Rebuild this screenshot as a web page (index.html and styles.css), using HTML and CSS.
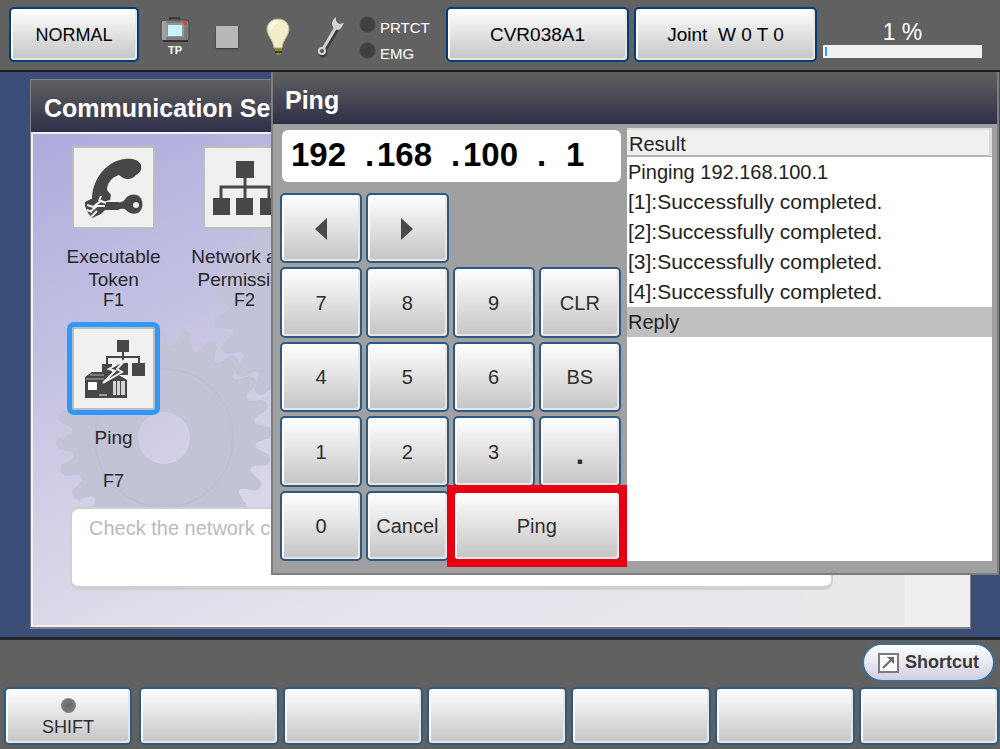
FILE: index.html
```html
<!DOCTYPE html>
<html lang="en">
<head>
<meta charset="utf-8">
<meta name="viewport" content="width=device-width, initial-scale=1">
<title>Ping</title>
<link rel="stylesheet" href="styles.css">
</head>
<body>
<header class="topbar">
  <button class="btn mode" type="button">NORMAL</button>
  <div class="status">
    <div class="tp">
      <svg width="30" height="26" viewBox="0 0 30 26" aria-hidden="true">
        <path d="M10 3V1h9v2" fill="none" stroke="#3c3c3c" stroke-width="2"/>
        <rect x="1" y="3" width="28" height="21" rx="3" fill="#7b7d7e" stroke="#4a4a4a"/>
        <rect x="2" y="4" width="4" height="19" fill="#a0a0a0"/>
        <rect x="6" y="6" width="18" height="14" fill="#969696"/>
        <rect x="8" y="8" width="14" height="11" fill="#c8f4fc"/>
        <circle cx="25" cy="6" r="2" fill="#e84040"/>
        <path d="M3 24h25" stroke="#333" stroke-width="2"/>
      </svg>
      <span>TP</span>
    </div>
    <span class="stop"></span>
    <svg width="26" height="40" viewBox="0 0 26 40" aria-label="Lamp">
      <path d="M13 2C6 2 2 7 2 12c0 7 6 10 7 19h8c1-9 7-12 7-19C24 7 20 2 13 2z" fill="#f3edc8" stroke="#b9b397"/>
      <path d="M6 12c0-4 3-7 7-7" fill="none" stroke="#fffdf0" stroke-width="3"/>
      <path d="M10 31h7v4l-2 3h-3l-2-3z" fill="#8c8a35"/>
      <path d="M10 35h7" stroke="#454420" stroke-width="2"/>
    </svg>
    <svg width="28" height="42" viewBox="0 0 28 42" aria-label="Maintenance">
      <g fill="none" stroke="#3c3c3c" transform="translate(1 2)">
        <path d="M6 33 19 12" stroke-width="4"/>
        <circle cx="5" cy="35" r="3" stroke-width="3"/>
      </g>
      <path d="M6 33 19 11" stroke="#d4d4d4" stroke-width="3"/>
      <circle cx="5" cy="35" r="3" fill="#555" stroke="#d4d4d4" stroke-width="2"/>
      <path d="M19 1c-4 3-5 7-3 10 2 3 6 4 8 1l3-5-5 1-3-3z" fill="#d4d4d4"/>
    </svg>
  </div>
  <ul class="leds">
    <li>PRTCT</li>
    <li>EMG</li>
  </ul>
  <button class="btn wide" type="button">CVR038A1</button>
  <button class="btn wide" type="button">Joint&nbsp; W 0 T 0</button>
  <div class="override">
    <label for="speed">1 %</label>
    <progress id="speed" max="100" value="1"></progress>
  </div>
</header>

<main class="stage">
  <section class="window">
    <h1>Communication Setup</h1>
    <div class="panel">
      <svg class="gears" width="460" height="480" viewBox="0 0 460 480" aria-hidden="true">
        <defs>
          <path id="tooth" d="M-13-86C-8-94-7-99-6-105Q0-112 6-105C7-99 8-94 13-86z"/>
          <g id="quarter">
            <use href="#tooth"/>
            <use href="#tooth" transform="rotate(15)"/>
            <use href="#tooth" transform="rotate(30)"/>
            <use href="#tooth" transform="rotate(45)"/>
            <use href="#tooth" transform="rotate(60)"/>
            <use href="#tooth" transform="rotate(75)"/>
          </g>
          <g id="gear">
            <use href="#quarter"/>
            <use href="#quarter" transform="rotate(90)"/>
            <use href="#quarter" transform="rotate(180)"/>
            <use href="#quarter" transform="rotate(270)"/>
            <path fill-rule="evenodd" d="M-92 0a92 92 0 1 0 184 0a92 92 0 1 0-184 0zM-26 0a26 26 0 1 0 52 0a26 26 0 1 0-52 0z"/>
          </g>
        </defs>
        <use href="#gear" transform="translate(131 304) rotate(-3)" fill="#c2c3d5"/>
        <circle cx="131" cy="304" r="69" fill="none" stroke="#bcbed1" stroke-width="2"/>
        <use href="#gear" transform="translate(288 172) rotate(6)" fill="#c2c3d8"/>
      </svg>
      <div class="menu">
        <a class="item" href="#token">
          <span class="tile">
            <svg width="64" height="64" viewBox="0 0 64 64" aria-hidden="true">
              <g fill="#464846">
                <path d="M10 46C9 24 24 5 43 3c8-1 14 1 16 6 1 5-1 8-5 10-3 4-8 5-13 3l-4-3c-7 2-12 8-12 15l4 5-1 5-7 2z"/>
                <path d="M22 46h14c4 1 6-1 8-4 3-4 10-5 14-1 4 5 3 13-2 16-5 2-9 0-12-3-3-2-5-1-8 0H22z"/>
                <path d="M3 46l6-3 12 2 3 8-5 5-9 4-4-5-3-7z"/>
              </g>
              <circle cx="54" cy="49" r="3" fill="#f0f0f0"/>
              <path d="M5 49l6 2 8-6 5 2M8 56l7-6h8M9 61l6-6M19 40l-2 5M5 54l5 2" fill="none" stroke="#f0f0f0" stroke-width="2"/>
            </svg>
          </span>
          <span class="name">Executable<br>Token</span>
          <span class="key">F1</span>
        </a>
        <a class="item" href="#network">
          <span class="tile">
            <svg width="64" height="64" viewBox="0 0 64 64" aria-hidden="true">
              <path d="M23 5h18v17H23zM0 42h17v17H0zM23 42h17v17H23zM47 42h17v17H47z" fill="#464846"/>
              <path d="M32 20v24M8 44V31h48v13" fill="none" stroke="#464846" stroke-width="3"/>
            </svg>
          </span>
          <span class="name">Network and<br>Permission</span>
          <span class="key">F2</span>
        </a>
        <a class="item selected" href="#ping">
          <span class="tile">
            <svg width="64" height="64" viewBox="0 0 64 64" aria-hidden="true">
              <path d="M35 3h12v12H35zM20 27h10v10H20zM35 26h11v12H35zM50 26h13v13H50z" fill="#464846"/>
              <path d="M41 14v14M25 28v-8h32v7" fill="none" stroke="#464846" stroke-width="2"/>
              <path d="M3 43v-3l7-5h22l13 8v18H3z" fill="#464846"/>
              <path d="M6 45h9v8H6z" fill="#fafafa"/>
              <path d="M31 44h3v14h-3zM35 44h3v14h-3zM39 44h4v14h-4z" fill="#d4d4d4"/>
              <path d="M17 58h8" stroke="#999" stroke-width="2"/>
              <path d="M4 42h18M8 38h14" stroke="#b0b0b0"/>
              <path d="M43 23 27 32l6 2-12 12 19-11-5-3z" fill="#464846" stroke="#f0f0f0" stroke-width="2"/>
            </svg>
          </span>
          <span class="name">Ping</span>
          <span class="key">F7</span>
        </a>
      </div>
      <p class="hint">Check the network connection.</p>
    </div>
  </section>

  <section class="dialog" role="dialog" aria-labelledby="dialog-title">
    <h2 id="dialog-title">Ping</h2>
    <div class="dialog-body">
      <form class="entry">
        <div class="address" role="group" aria-label="IP address">
          <input aria-label="Octet 1" value="192"><span>.</span>
          <input aria-label="Octet 2" value="168"><span>.</span>
          <input aria-label="Octet 3" value="100"><span>.</span>
          <input class="last" aria-label="Octet 4" value="1">
        </div>
        <div class="keypad">
          <button class="btn" type="button" aria-label="Left"><svg width="12" height="22" viewBox="0 0 12 22"><path d="M12 0v22L0 11z" fill="#484a48"/></svg></button>
          <button class="btn" type="button" aria-label="Right"><svg width="12" height="22" viewBox="0 0 12 22"><path d="M0 0v22l12-11z" fill="#484a48"/></svg></button>
          <button class="btn row-start" type="button">7</button>
          <button class="btn" type="button">8</button>
          <button class="btn" type="button">9</button>
          <button class="btn" type="button">CLR</button>
          <button class="btn" type="button">4</button>
          <button class="btn" type="button">5</button>
          <button class="btn" type="button">6</button>
          <button class="btn" type="button">BS</button>
          <button class="btn" type="button">1</button>
          <button class="btn" type="button">2</button>
          <button class="btn" type="button">3</button>
          <button class="btn point" type="button">.</button>
          <button class="btn" type="button">0</button>
          <button class="btn" type="button">Cancel</button>
          <button class="btn send" type="button">Ping</button>
        </div>
      </form>
      <div class="results">
        <h3>Result</h3>
        <ul>
          <li>Pinging 192.168.100.1</li>
          <li class="reply">[1]:Successfully completed.</li>
          <li class="reply">[2]:Successfully completed.</li>
          <li class="reply">[3]:Successfully completed.</li>
          <li class="reply">[4]:Successfully completed.</li>
          <li class="current">Reply</li>
        </ul>
      </div>
    </div>
  </section>
</main>

<footer class="bottombar">
  <button class="shortcut" type="button">
    <svg width="21" height="20" viewBox="0 0 21 20" aria-hidden="true">
      <rect x="1" y="1" width="19" height="18" fill="#fafafa" stroke="#7c7c7c" stroke-width="2"/>
      <path d="M5 15 14 6" stroke="#6a6a6a" stroke-width="2"/>
      <path d="M9 4h7v7z" fill="#6a6a6a"/>
    </svg>
    Shortcut
  </button>
  <div class="softkeys">
    <button class="btn shift" type="button"><i></i>SHIFT</button>
    <button class="btn" type="button" aria-label="Soft key 1"></button>
    <button class="btn" type="button" aria-label="Soft key 2"></button>
    <button class="btn" type="button" aria-label="Soft key 3"></button>
    <button class="btn" type="button" aria-label="Soft key 4"></button>
    <button class="btn" type="button" aria-label="Soft key 5"></button>
    <button class="btn" type="button" aria-label="Soft key 6"></button>
  </div>
</footer>
</body>
</html>
```
FILE: styles.css
```css
* {
  box-sizing: border-box;
}

body {
  margin: 0;
  min-height: 100vh;
  display: flex;
  flex-direction: column;
  background: #616161;
  color: #222;
  font-family: "Liberation Sans", Arial, sans-serif;
  font-size: 20px;
}

h1, h2, h3, p, ul {
  margin: 0;
  padding: 0;
}

ul {
  list-style: none;
}

.btn {
  display: flex;
  align-items: center;
  justify-content: center;
  margin: 0;
  padding: 0;
  border: 2px solid #2c5a86;
  border-radius: 5px;
  background: linear-gradient(#ffffff, #c4c4c4);
  box-shadow: inset 2px 2px 0 #ffffff, inset -2px -2px 0 #e6e6e6;
  color: #2e2e2e;
  font: inherit;
}

/* Status bar */
.topbar {
  display: flex;
  align-items: center;
  height: 72px;
  padding: 0 18px 2px 9px;
  border-bottom: 2px solid #1c1c1c;
  background: #616161;
}

.topbar .btn {
  height: 55px;
  padding-top: 2px;
  border-color: #003c78;
  color: #000;
  font-size: 19px;
}

.topbar .mode {
  width: 130px;
  font-size: 18px;
}

.topbar .wide {
  flex: 1;
  margin-right: 5px;
}

.status {
  display: flex;
  align-items: center;
  justify-content: space-between;
  width: 185px;
  margin: 6px 14px 0 21px;
}

.tp {
  display: flex;
  flex-direction: column;
  align-items: center;
  color: #fff;
  font-size: 11px;
  font-weight: bold;
  line-height: 14px;
}

.stop {
  width: 22px;
  height: 22px;
  background: #b8b8b8;
  box-shadow: 0 1px 2px #333;
}

.leds {
  width: 87px;
  margin-top: 14px;
  color: #fff;
  font-size: 15px;
  line-height: 26px;
}

.leds li {
  display: flex;
  align-items: center;
  gap: 4px;
}

.leds li::before {
  content: "";
  width: 15px;
  height: 15px;
  margin-bottom: 7px;
  border: 1px solid #555;
  border-radius: 50%;
  background: #404040;
}

.override {
  display: flex;
  flex-direction: column;
  width: 159px;
  margin: 9px 0 0 1px;
  color: #fff;
  font-size: 23px;
  line-height: 26px;
  text-align: center;
}

progress {
  appearance: none;
  display: block;
  width: 100%;
  height: 13px;
  padding: 2px;
  border: 0;
  background: #f0f0f0;
}

progress::-webkit-progress-bar {
  background: #f0f0f0;
}

progress::-webkit-progress-value {
  background: #3399ff;
}

/* Work area */
.stage {
  position: relative;
  flex: 1;
  display: flex;
  padding: 7px 29px 8px 30px;
  background: #3a4e78;
  border-bottom: 3px solid #282828;
}

.window {
  flex: 1;
  display: flex;
  flex-direction: column;
  border: 1px solid #808080;
  border-bottom-width: 2px;
}

.window h1,
.dialog h2 {
  height: 52px;
  background: linear-gradient(#606060, #2f2f48);
  color: #fff;
  font-size: 25px;
  line-height: 56px;
}

.window h1 {
  padding-left: 13px;
}

.panel {
  position: relative;
  flex: 1;
  display: flex;
  flex-direction: column;
  justify-content: space-between;
  padding: 12px 135px 35px 15px;
  overflow: hidden;
  border: 2px solid #f0f0f4;
  background:
    linear-gradient(#efefef, #efefef) right / 63px 100% no-repeat,
    linear-gradient(#e8e8e8, #e8e8e8) right / 163px 100% no-repeat,
    linear-gradient(155deg, #acabdd, #cfcde5 38%, #e4e3ec 65%, #e8e8ec);
}

.gears {
  position: absolute;
  left: 0;
  top: 0;
}

.menu {
  position: relative;
  display: grid;
  grid-template-columns: 131px 131px;
  row-gap: 17px;
}

.item {
  display: flex;
  flex-direction: column;
  align-items: center;
  color: #26262c;
  font-size: 19px;
  text-align: center;
  text-decoration: none;
}

.tile {
  display: flex;
  align-items: center;
  justify-content: center;
  width: 83px;
  height: 83px;
  border: 2px solid #bdbdbd;
  background: #f0f0f0;
}

.selected .tile {
  outline: 5px solid #2f98f8;
  border-radius: 2px;
}

.name {
  min-height: 46px;
  margin-top: 16px;
  line-height: 23px;
}

.key {
  font-size: 18px;
  line-height: 19px;
}

.hint {
  position: relative;
  height: 83px;
  margin-left: 22px;
  padding: 7px 17px;
  border: 2px solid #d0d0d0;
  border-bottom-width: 4px;
  border-radius: 9px;
  background: #fff;
  color: #bababa;
  line-height: 24px;
}

/* Ping dialog */
.dialog {
  position: absolute;
  top: 0;
  right: 1px;
  bottom: 62px;
  left: 271px;
  display: flex;
  flex-direction: column;
  border: 2px solid #7e7e7e;
  border-top: 0;
  background: #a0a0a0;
}

.dialog h2 {
  padding-left: 12px;
}

.dialog-body {
  flex: 1;
  display: flex;
  gap: 6px;
  padding: 4px 5px 12px 7px;
}

.entry {
  flex: none;
  display: flex;
  flex-direction: column;
  gap: 11px;
  width: 341px;
}

.address {
  display: flex;
  align-items: center;
  height: 52px;
  margin: 2px 0 0 2px;
  padding: 0 7px 3px 9px;
  border-radius: 6px;
  background: #fff;
  color: #000;
  font-size: 33px;
  font-weight: bold;
}

.address input {
  width: 74px;
  padding: 0;
  border: 0;
  background: none;
  color: inherit;
  font: inherit;
}

.address span {
  width: 12px;
}

.address .last {
  width: 56px;
  padding-left: 17px;
}

.keypad {
  flex: 1;
  display: grid;
  grid-template-columns: repeat(4, 1fr);
  grid-auto-rows: 1fr;
  gap: 4px;
}

.keypad .btn {
  padding-top: 2px;
}

.row-start {
  grid-column-start: 1;
}

.keypad .point {
  padding-top: 6px;
  font-size: 30px;
  font-weight: bold;
}

.send {
  position: relative;
  grid-column: span 2;
}

/* Highlight frame around the active key */
.send::after {
  content: "";
  position: absolute;
  inset: -8px;
  border: 8px solid #e60012;
}

.results {
  flex: 1;
  background: #fff;
  line-height: 30px;
}

.results h3 {
  height: 29px;
  padding-left: 2px;
  border: 2px solid #dcdcdc;
  border-width: 2px 3px 2px 0;
  border-bottom-color: #b4b4b4;
  background: #f0f0f0;
  font-size: 20px;
  font-weight: normal;
  line-height: 28px;
}

.results li {
  padding-left: 1px;
}

.results .reply {
  font-size: 21px;
}

.results .current {
  background: #c0c0c0;
}

/* Soft keys */
.bottombar {
  display: flex;
  flex-direction: column;
  align-items: flex-end;
  gap: 5px;
  padding: 3px 1px 4px 4px;
  background: #616161;
}

.shortcut {
  display: flex;
  align-items: center;
  gap: 6px;
  height: 39px;
  margin-right: 4px;
  padding: 0 14px;
  border: 2px solid #3d6e96;
  border-radius: 20px;
  background: linear-gradient(#ffffff, #d2cee2);
  color: #3a3a3a;
  font: bold 18px "Liberation Sans", Arial, sans-serif;
}

.softkeys {
  display: grid;
  grid-template-columns: 131px repeat(6, 1fr);
  gap: 4px;
  width: 100%;
}

.softkeys .btn {
  height: 58px;
}

.softkeys .shift {
  flex-direction: column;
  gap: 4px;
  margin-right: 3px;
  padding-top: 3px;
  font-size: 18px;
}

.shift i {
  width: 15px;
  height: 15px;
  border-radius: 50%;
  background: radial-gradient(#666, #8c8c8c);
}
```
